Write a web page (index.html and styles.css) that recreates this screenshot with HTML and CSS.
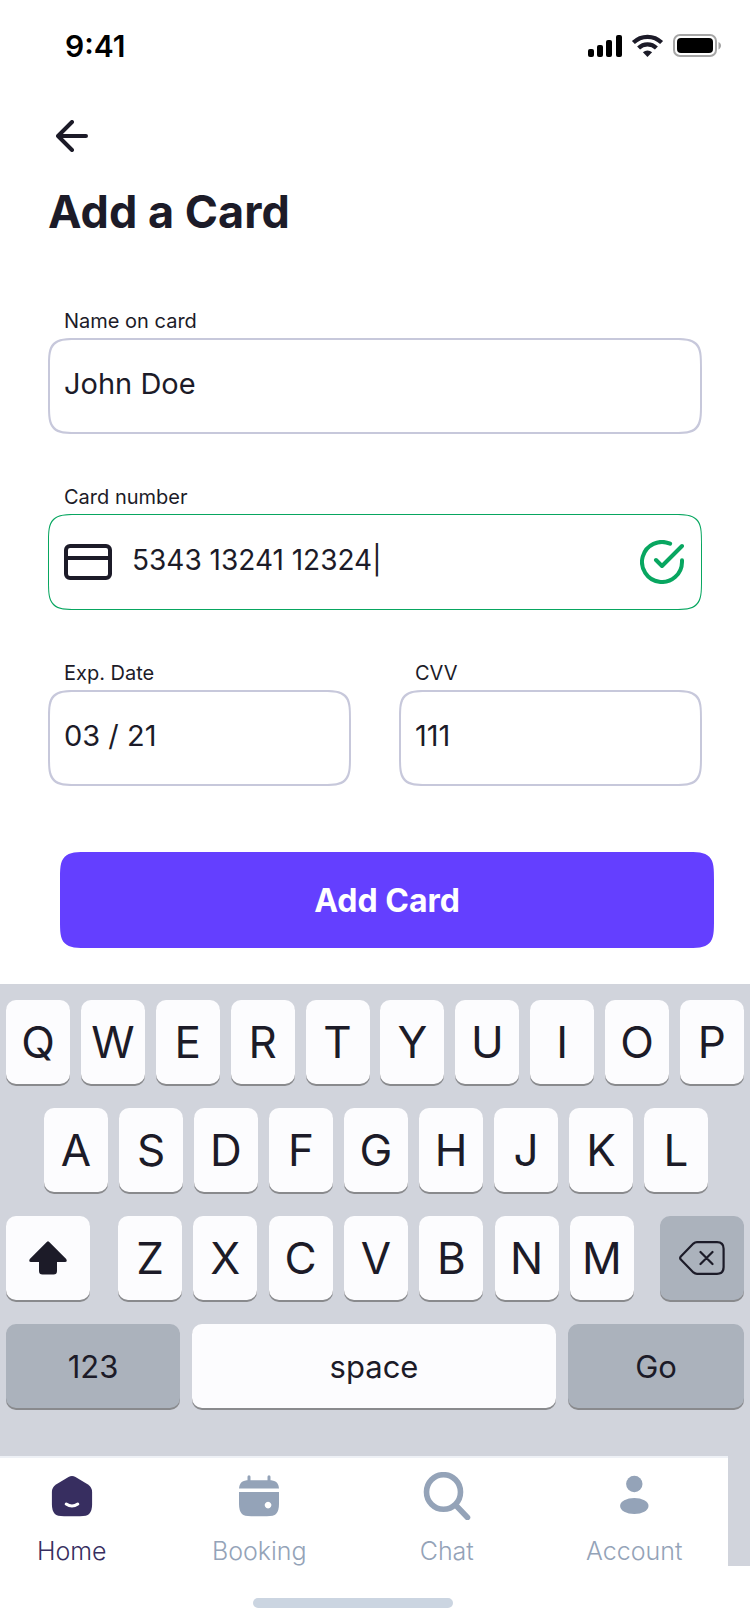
FILE: index.html
```html
<!DOCTYPE html>
<html lang="en">
<head>
<meta charset="utf-8">
<meta name="viewport" content="width=device-width, initial-scale=1">
<title>Add a Card</title>
<link rel="stylesheet" href="styles.css">
</head>
<body>
<div class="screen">
  <header class="status">
    <span class="status-time">9:41</span>
    <svg class="status-icons" width="134" height="24" viewBox="0 0 134 24" aria-hidden="true">
      <rect x="0" y="15" width="6" height="8" rx="2"/>
      <rect x="9" y="11" width="6" height="12" rx="2"/>
      <rect x="18" y="6" width="6" height="17" rx="2"/>
      <rect x="28" y="1" width="6" height="22" rx="2"/>
      <g fill="none" stroke="#1c1b28" stroke-width="4.2">
        <path d="M45.400 8.600A20 20 0 0 1 73.600 8.600"/>
        <path d="M50.600 14A12.600 12.600 0 0 1 68.400 14"/>
      </g>
      <path fill="#1c1b28" d="M59.500 23l-4.600-4.700a7 7 0 0 1 9.200 0z"/>
      <rect x="86" y="1" width="42" height="21" rx="6" fill="none" stroke="#a6a6a6" stroke-width="2"/>
      <rect x="89" y="4" width="36" height="15" rx="4"/>
      <path fill="#a6a6a6" d="M130.500 8c3.400 1.400 3.400 6 0 7.400z"/>
    </svg>
  </header>

  <main class="content">
    <button class="back" type="button" aria-label="Back">
      <svg width="32" height="32" viewBox="0 0 32 32" aria-hidden="true"><path d="M30 16H2M16 2L2 16l14 14"/></svg>
    </button>
    <h1 class="title">Add a Card</h1>

    <form class="form">
      <div class="field">
        <label class="label" for="name">Name on card</label>
        <div class="box"><input class="input" id="name" type="text" value="John Doe"></div>
      </div>
      <div class="field">
        <label class="label" for="number">Card number</label>
        <div class="box box-valid">
          <svg width="48" height="36" viewBox="0 0 48 36" aria-hidden="true" fill="none" stroke="#1c1b28" stroke-width="4"><rect x="2" y="2" width="44" height="32" rx="4"/><path d="M2 14h44"/></svg>
          <input class="input input-number" id="number" type="text" value="5343 13241 12324|">
          <svg width="44" height="44" viewBox="0 0 44 44" aria-hidden="true" fill="none" stroke="#08a660" stroke-width="4" stroke-linecap="round" stroke-linejoin="round"><path d="M42 20.200V22A20 20 0 1 1 30.100 3.700"/><path d="M42 6L22 26l-6-6"/></svg>
        </div>
      </div>
      <div class="pair">
        <div class="field">
          <label class="label" for="exp">Exp. Date</label>
          <div class="box"><input class="input" id="exp" type="text" value="03 / 21"></div>
        </div>
        <div class="field">
          <label class="label" for="cvv">CVV</label>
          <div class="box"><input class="input" id="cvv" type="text" value="111"></div>
        </div>
      </div>
      <button class="submit" type="button">Add Card</button>
    </form>
  </main>

  <section class="dock">
    <div class="keyboard">
      <div class="row">
        <button class="key" type="button">Q</button><button class="key" type="button">W</button><button class="key" type="button">E</button><button class="key" type="button">R</button><button class="key" type="button">T</button><button class="key" type="button">Y</button><button class="key" type="button">U</button><button class="key" type="button">I</button><button class="key" type="button">O</button><button class="key" type="button">P</button>
      </div>
      <div class="row row-inset">
        <button class="key" type="button">A</button><button class="key" type="button">S</button><button class="key" type="button">D</button><button class="key" type="button">F</button><button class="key" type="button">G</button><button class="key" type="button">H</button><button class="key" type="button">J</button><button class="key" type="button">K</button><button class="key" type="button">L</button>
      </div>
      <div class="row row-third">
        <button class="key key-side" type="button" aria-label="Shift">
          <svg width="38" height="34" viewBox="0 0 38 34" aria-hidden="true"><path fill="#1c1b28" d="M18 .8q1-1 2 0L37.200 18q1.500 3-1.200 3H28v9q0 3.500-3.500 3.500h-11Q10 33.500 10 30v-9H2Q-.7 21 .8 18z"/></svg>
        </button>
        <div class="row row-inner">
          <button class="key" type="button">Z</button><button class="key" type="button">X</button><button class="key" type="button">C</button><button class="key" type="button">V</button><button class="key" type="button">B</button><button class="key" type="button">N</button><button class="key" type="button">M</button>
        </div>
        <button class="key key-side key-dark" type="button" aria-label="Delete">
          <svg width="46" height="34" viewBox="0 0 46 34" aria-hidden="true" fill="none" stroke="#1c1b28" stroke-width="2.200" stroke-linecap="round" stroke-linejoin="round"><path d="M18 1.200h20q6.600 0 6.600 6.600v18.400q0 6.600-6.600 6.600H18q-2 0-3.600-1.400L1.800 18.600q-1.300-1.600 0-3.200L14.400 2.600Q16 1.200 18 1.200M21.500 11l12 12M33.500 11l-12 12"/></svg>
        </button>
      </div>
      <div class="row row-bottom">
        <button class="key key-word key-dark" type="button">123</button>
        <button class="key key-word" type="button">space</button>
        <button class="key key-word key-dark" type="button">Go</button>
      </div>
    </div>
    <nav class="tabs">
      <a class="tab tab-active" href="#home">
        <svg width="48" height="48" viewBox="0 0 48 48" aria-hidden="true"><path fill="currentColor" d="M20.500 5q3.500-2 7 0L40 12.500q4 2.600 4.100 7.500v12q0 7-3 10-2.200 2.200-9.100 2.200H16q-6.900 0-9.100-2.200-3-3-3-10V20Q4 15.100 8 12.500z"/><path d="M18.200 32q5.800 4 11.600 0" fill="none" stroke="#fff" stroke-width="3" stroke-linecap="round"/></svg>
        <span>Home</span>
      </a>
      <a class="tab" href="#booking">
        <svg width="48" height="48" viewBox="0 0 48 48" aria-hidden="true" fill="currentColor"><path d="M14 4.800v7M34 4.800v7" stroke="currentColor" stroke-width="3" stroke-linecap="round"/><path d="M4 16.500C4.500 10.500 7.500 8.300 14 8.300h20c6.500 0 9.500 2.200 10 8.200z"/><path fill-rule="evenodd" d="M4 20h40v12q0 7-3 10-2.200 2.200-9.100 2.200H16.100q-6.900 0-9.100-2.200-3-3-3-10zM33 29.800a3.300 3.300 0 1 0 .1 0z"/></svg>
        <span>Booking</span>
      </a>
      <a class="tab" href="#chat">
        <svg width="48" height="48" viewBox="0 0 48 48" aria-hidden="true" fill="none" stroke="currentColor" stroke-width="5.600" stroke-linecap="round"><ellipse cx="20.500" cy="20" rx="17" ry="17.300"/><path d="M34 34.500l10.500 11" /></svg>
        <span>Chat</span>
      </a>
      <a class="tab" href="#account">
        <svg width="48" height="48" viewBox="0 0 48 48" aria-hidden="true" fill="currentColor"><circle cx="24.300" cy="12" r="8.200"/><ellipse cx="24.300" cy="34" rx="14.200" ry="8"/></svg>
        <span>Account</span>
      </a>
    </nav>
  </section>
  <footer class="home-bar"><span class="home-pill"></span></footer>
</div>
</body>
</html>
```
FILE: styles.css
```css
* { box-sizing: border-box; }

body {
  margin: 0;
  background: #fff;
  color: #1c1b28;
  font-family: Inter, "Liberation Sans", sans-serif;
}

button, input { font: inherit; color: inherit; }

.screen { overflow: hidden; }

.status {
  display: flex;
  align-items: center;
  justify-content: space-between;
  height: 92px;
  padding: 0 28px 0 65px;
  color: #000;
}
.status-time { font-size: 30px; font-weight: 600; line-height: 32px; }

.content { padding: 28px 48px 36px; }

.back {
  display: block;
  margin-left: 8px;
  padding: 0;
  border: 0;
  background: none;
}
.back svg {
  display: block;
  fill: none;
  stroke: #1c1b28;
  stroke-width: 4;
  stroke-linecap: round;
  stroke-linejoin: round;
}

.title {
  margin: 32px 0 68px;
  font-size: 45px;
  font-weight: 700;
  line-height: 56px;
}

.form { display: flex; flex-direction: column; gap: 50px; }
.field { min-width: 0; }
.label {
  display: block;
  height: 30px;
  padding: 0 16px;
  font-size: 20px;
  line-height: 26px;
}

.box {
  display: flex;
  align-items: center;
  gap: 20px;
  height: 96px;
  padding: 0 14px;
  border: 2px solid #c7c8db;
  border-radius: 32px;
  corner-shape: squircle;
}
.box-valid { border: 1px solid #08a660; padding: 0 17px 0 15px; }
.box svg { flex: none; }
.input {
  flex: 1;
  min-width: 0;
  padding: 0 0 4px;
  border: 0;
  outline: 0;
  background: none;
  font-size: 29px;
  line-height: 36px;
}
.input-number { font-size: 28px; }

.pair { display: grid; grid-template-columns: 1fr 1fr; gap: 48px; }

.submit {
  height: 96px;
  margin: 16px -12px 0 12px;
  border: 0;
  border-radius: 30px;
  corner-shape: squircle;
  background: #643fff;
  color: #fff;
  font-size: 32px;
  font-weight: 700;
}

.dock { background: #d1d4dc; }
.keyboard {
  display: flex;
  flex-direction: column;
  gap: 24px;
  padding: 16px 6px 48px;
}
.row { display: flex; justify-content: space-between; }
.row-inset { padding: 0 36px 0 38px; }
.row-inner { flex: 1; padding: 0 26px 0 28px; }
.row-bottom { display: grid; grid-template-columns: 174fr 364fr 176fr; gap: 12px; }

.key {
  display: flex;
  align-items: center;
  justify-content: center;
  width: 64px;
  height: 84px;
  padding: 0;
  border: 0;
  border-radius: 10px;
  background: #fcfcfe;
  box-shadow: 0 2px 0 #898a8d;
  font-size: 44px;
}
.key-side { width: 84px; }
.key-dark { background: #abb2bc; }
.key-word { width: auto; font-size: 31px; }

.tabs {
  display: grid;
  grid-template-columns: repeat(4, 1fr);
  width: 100%;
  height: 110px;
  margin-left: -22px;
  padding-top: 14px;
  border-top: 2px solid #eef1f6;
  background: #fff;
}
.tab {
  display: flex;
  flex-direction: column;
  align-items: center;
  gap: 16px;
  color: #94a3b8;
  font-size: 25px;
  font-weight: 300;
  line-height: 30px;
  text-decoration: none;
}
.tab-active { color: #372e60; }

.home-bar { display: flex; justify-content: center; padding: 32px 44px 16px 0; }
.home-pill {
  width: 200px;
  height: 10px;
  border-radius: 5px;
  background: #cbd5e1;
}
```
